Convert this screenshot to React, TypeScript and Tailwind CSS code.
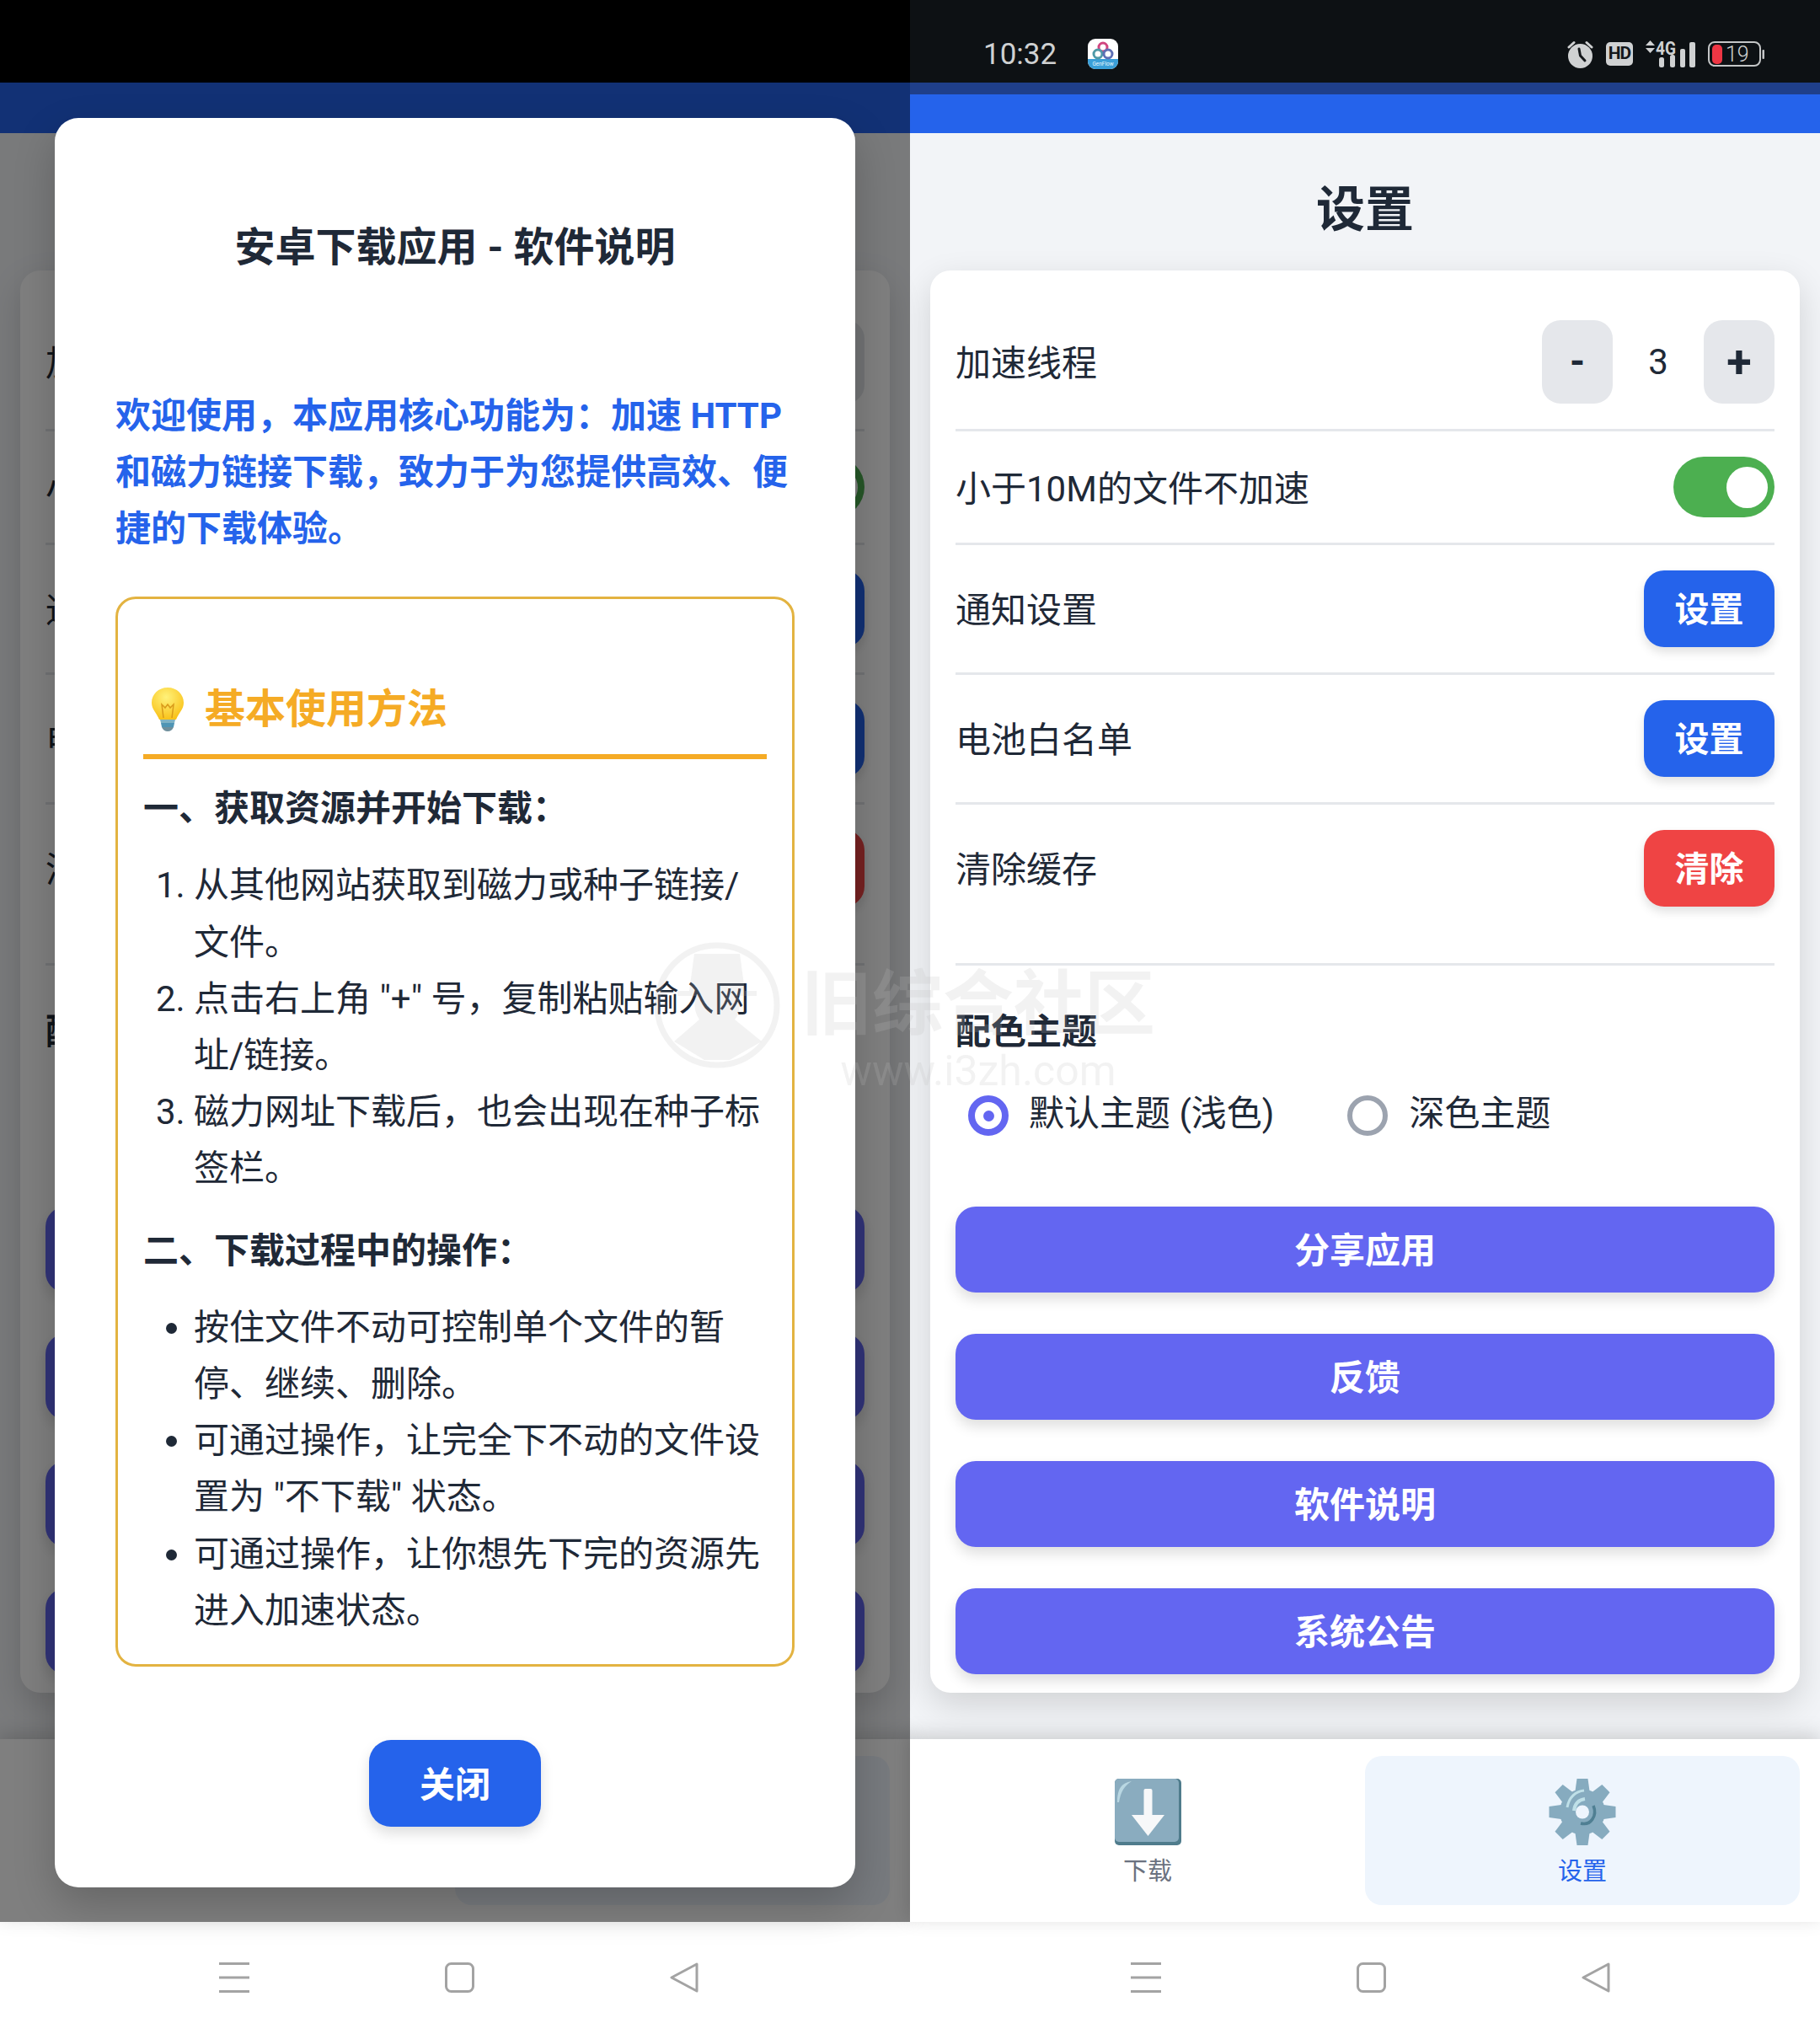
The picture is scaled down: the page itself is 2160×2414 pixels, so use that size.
import React from "react";

function AlarmIcon() {
  return (
    <svg width="31" height="34" viewBox="0 0 31 34">
      <path d="M2 9 L8 3.5 M29 9 L23 3.5" stroke="#cfd1d2" strokeWidth="3" strokeLinecap="round" />
      <circle cx="15.5" cy="19.5" r="14.5" fill="#cfd1d2" />
      <path d="M14 11 L15.5 19 L21 25" stroke="#14181b" strokeWidth="3" fill="none" strokeLinecap="round" />
    </svg>
  );
}

function SignalIcon() {
  return (
    <svg width="59" height="32" viewBox="0 0 59 32">
      <path d="M5.5 0 L11 6 L0 6 Z M5.5 15 L11 9 L0 9 Z" fill="#cfd1d2" />
      <text x="12" y="16.5" fontSize="22" fontWeight="700" fill="#cfd1d2" fontFamily="Roboto, sans-serif" textLength="24" lengthAdjust="spacingAndGlyphs">4G</text>
      <rect x="16" y="20" width="6" height="12" rx="2.5" fill="#cfd1d2" />
      <rect x="29" y="17" width="6" height="15" rx="2.5" fill="#cfd1d2" />
      <rect x="41" y="10" width="6" height="22" rx="2" fill="#cfd1d2" />
      <rect x="52" y="2" width="7" height="30" rx="2" fill="#cfd1d2" />
    </svg>
  );
}

function BatteryIcon() {
  return (
    <svg width="67" height="30" viewBox="0 0 67 30">
      <rect x="1" y="1" width="61" height="28" rx="7" fill="none" stroke="#c4c6c7" strokeWidth="2" />
      <rect x="5" y="4" width="12" height="23" rx="5" fill="#ee3644" />
      <rect x="64.5" y="10" width="2.5" height="11" rx="1" fill="#c4c6c7" />
      <text x="21" y="24" fontSize="25" fill="#cfd1d2" fontFamily="Roboto, sans-serif" fontWeight="300">19</text>
    </svg>
  );
}

function AppIcon() {
  return (
    <svg width="36" height="36" viewBox="0 0 36 36">
      <defs>
        <clipPath id="app-clip">
          <rect width="36" height="36" rx="9" />
        </clipPath>
      </defs>
      <g clipPath="url(#app-clip)">
        <rect width="36" height="36" fill="#ffffff" />
        <rect y="24" width="36" height="12" fill="#3a9fd8" />
        <circle cx="18" cy="10" r="5" fill="none" stroke="#d0457f" strokeWidth="3" />
        <circle cx="12" cy="18" r="5" fill="none" stroke="#4f9aa8" strokeWidth="3" />
        <circle cx="24" cy="18" r="5" fill="none" stroke="#5d6fb5" strokeWidth="3" />
        <text x="18" y="32" fontSize="6.5" textAnchor="middle" fill="#e8f6fd" fontFamily="Roboto, sans-serif">GenFlow</text>
      </g>
    </svg>
  );
}

function StatusBar() {
  return (
    <div className="h-[98px] bg-[#0d1114] flex items-center pt-[30px] pl-[87px] pr-[66px]">
      <span className="text-[35px] leading-none text-[#cfd1d2] font-['Roboto',sans-serif]">10:32</span>
      <span className="ml-[37px] flex">
        <AppIcon />
      </span>
      <div className="ml-auto flex items-center gap-[15px]">
        <AlarmIcon />
        <div className="w-[32px] h-[28px] rounded-[5px] bg-[#cfd1d2] flex items-center justify-center text-[21px] tracking-[-1px] font-bold text-[#14181b] font-['Roboto',sans-serif]">HD</div>
        <SignalIcon />
        <BatteryIcon />
      </div>
    </div>
  );
}

function DownloadEmoji() {
  return (
    <svg width="79" height="79" viewBox="0 0 79 79">
      <rect width="79" height="79" rx="5" fill="#4f7c8c" />
      <rect width="76" height="75" rx="5" fill="#8aacbf" />
      <path d="M3 28 C3 12 8 5 20 3 C12 8 7 15 5 28 Z" fill="#b9d7e2" />
      <rect x="34.5" y="12" width="10" height="33" rx="2" fill="#f7f8f9" />
      <path d="M20 43 L59 43 L39.5 68 Z" fill="#f7f8f9" />
    </svg>
  );
}

function GearEmoji() {
  const angles = [0, 45, 90, 135, 180, 225, 270, 315];
  return (
    <svg width="80" height="79" viewBox="0 0 80 79">
      {angles.map((a) => (
        <path key={a} d="M33.5 0 L46.5 0 L49 18 L31 18 Z" fill="#86abbf" transform={`rotate(${a} 40 39.5)`} />
      ))}
      <circle cx="40" cy="39.5" r="27" fill="#86abbf" />
      <path d="M22 34 C24 22 32 15 42 14" stroke="#bfe0e8" strokeWidth="3" fill="none" />
      <path d="M30 38 C31 29 36 25 43 24" stroke="#bfe0e8" strokeWidth="4" fill="none" />
      <path d="M53 32 C58 44 50 56 38 53" stroke="#4f7f93" strokeWidth="3.5" fill="none" />
      <circle cx="40" cy="39.5" r="8" fill="#eef5fd" />
    </svg>
  );
}

function Row({ label, children, last }: { label: string; children: React.ReactNode; last?: boolean }) {
  return (
    <div className={last ? "flex items-center justify-between pt-[30px] pb-[67px] border-b-[3px] border-[#e5e7eb]" : "flex items-center justify-between py-[30px] border-b-[3px] border-[#e5e7eb]"}>
      <span className="pt-[5px] text-[42px] leading-[60px] text-[#1f2937]">{label}</span>
      {children}
    </div>
  );
}

function SmallButton({ red, children }: { red?: boolean; children: React.ReactNode }) {
  return (
    <div className={red ? "w-[155px] h-[91px] pt-[4px] rounded-[24px] bg-[#ef4444] text-white font-bold text-[41px] flex items-center justify-center shadow-[0_6px_12px_rgba(0,0,0,0.12)]" : "w-[155px] h-[91px] pt-[4px] rounded-[24px] bg-[#2563eb] text-white font-bold text-[41px] flex items-center justify-center shadow-[0_6px_12px_rgba(0,0,0,0.12)]"}>
      {children}
    </div>
  );
}

function WideButton({ children }: { children: React.ReactNode }) {
  return (
    <div className="h-[102px] pt-[3px] rounded-[24px] bg-[#6366f1] text-white font-bold text-[42px] flex items-center justify-center shadow-[0_8px_16px_rgba(0,0,0,0.13)]">
      {children}
    </div>
  );
}

function Settings() {
  return (
    <div className="flex-1 flex flex-col min-h-0 bg-[#f2f4f7]">
      <h1 className="h-[163px] pt-[51px] text-center text-[58px] leading-[80px] font-bold text-[#1f2937]">设置</h1>
      <div className="mx-[24px] rounded-[24px] bg-white px-[30px] pt-[29px] pb-[22px] shadow-[0_14px_40px_rgba(0,0,0,0.14)]">
        <Row label="加速线程">
          <div className="flex items-center">
            <div className="w-[84px] h-[99px] rounded-[22px] bg-[#e5e7eb] flex items-center justify-center text-[46px] font-bold text-[#1f2937]">-</div>
            <span className="w-[108px] text-center text-[42px] text-[#1f2937]">3</span>
            <div className="w-[84px] h-[99px] rounded-[22px] bg-[#e5e7eb] flex items-center justify-center text-[54px] font-bold text-[#1f2937]">+</div>
          </div>
        </Row>
        <Row label="小于10M的文件不加速">
          <div className="w-[120px] h-[72px] rounded-full bg-[#4caf50] flex items-center justify-end pr-[8px]">
            <div className="w-[49px] h-[49px] rounded-full bg-white" />
          </div>
        </Row>
        <Row label="通知设置">
          <SmallButton>设置</SmallButton>
        </Row>
        <Row label="电池白名单">
          <SmallButton>设置</SmallButton>
        </Row>
        <Row label="清除缓存" last>
          <SmallButton red>清除</SmallButton>
        </Row>
        <h3 className="mt-[51px] text-[42px] leading-[56px] font-bold text-[#1f2937]">配色主题</h3>
        <div className="mt-[47px] pl-[15px] flex items-center text-[42px] text-[#1f2937] h-[48px]">
          <span className="w-[48px] h-[48px] rounded-full border-[8px] border-[#6366f1] flex items-center justify-center">
            <span className="w-[13px] h-[13px] rounded-full bg-[#6366f1]" />
          </span>
          <span className="ml-[24px] pb-[6px]">默认主题 (浅色)</span>
          <span className="ml-[87px] w-[48px] h-[48px] rounded-full border-[6px] border-[#9ca3af]" />
          <span className="ml-[25px] pb-[6px]">深色主题</span>
        </div>
        <div className="mt-[84px] flex flex-col gap-[49px]">
          <WideButton>分享应用</WideButton>
          <WideButton>反馈</WideButton>
          <WideButton>软件说明</WideButton>
          <WideButton>系统公告</WideButton>
        </div>
      </div>
    </div>
  );
}

function BottomNav() {
  return (
    <div className="relative z-10 h-[217px] bg-white px-[24px] py-[20px] flex shadow-[0_-5px_22px_rgba(0,0,0,0.17)]">
      <div className="flex-1 flex flex-col items-center pt-[27px]">
        <DownloadEmoji />
        <span className="mt-[13px] text-[29px] leading-[36px] text-[#6b7280]">下载</span>
      </div>
      <div className="flex-1 flex flex-col items-center pt-[27px] rounded-[20px] bg-[#eef5fd]">
        <GearEmoji />
        <span className="mt-[13px] text-[29px] leading-[36px] text-[#2563eb]">设置</span>
      </div>
    </div>
  );
}

function SystemNav({ shift }: { shift?: boolean }) {
  return (
    <div className={shift ? "h-[133px] bg-white flex items-start pt-[48px] pl-[262px] gap-[232px]" : "h-[133px] bg-white flex items-start pt-[48px] pl-[260px] gap-[232px]"}>
      <svg width="36" height="36" viewBox="0 0 36 36">
        <path d="M0 1.5 H36 M0 18 H36 M0 34.5 H36" stroke="#a3a3a3" strokeWidth="3" />
      </svg>
      <svg width="35" height="36" viewBox="0 0 35 36">
        <rect x="1.5" y="1.5" width="32" height="33" rx="6" fill="none" stroke="#a3a3a3" strokeWidth="3" />
      </svg>
      <svg width="34" height="36" viewBox="0 0 34 36">
        <path d="M32 2 L2 18 L32 34 Z" fill="none" stroke="#a3a3a3" strokeWidth="3" strokeLinejoin="round" />
      </svg>
    </div>
  );
}

function Bulb() {
  return (
    <svg width="38" height="52" viewBox="0 0 38 52" className="shrink-0">
      <defs>
        <radialGradient id="bulb" cx="45%" cy="30%" r="70%">
          <stop offset="0%" stopColor="#fff27a" />
          <stop offset="100%" stopColor="#f9c21a" />
        </radialGradient>
      </defs>
      <path d="M19 0 C8 0 0 8 0 18 C0 26 6 30 9 38 L29 38 C32 30 38 26 38 18 C38 8 30 0 19 0 Z" fill="url(#bulb)" />
      <path d="M14 36 L12 20 L16 24 L19 20 L22 24 L26 20 L24 36" fill="none" stroke="#d99a1a" strokeWidth="1.5" />
      <path d="M10 38 H28 L27 42 H11 Z" fill="#7fb2c4" />
      <path d="M11 42 H27 L26 47 H12 Z" fill="#4f95b5" />
      <path d="M12 47 H26 C25 50 22 52 19 52 C16 52 13 50 12 47 Z" fill="#6f8f9c" />
    </svg>
  );
}

function Modal() {
  return (
    <div className="w-[950px] h-[2100px] rounded-[28px] bg-white px-[72px] pt-[124px] shadow-[0_20px_50px_rgba(0,0,0,0.2)]">
      <h2 className="text-center text-[48px] leading-[60px] font-bold text-[#1f2937]">安卓下载应用 - 软件说明</h2>
      <p className="mt-[136px] text-[42px] leading-[67.2px] font-bold text-[#2563eb]">欢迎使用，本应用核心功能为：加速 HTTP 和磁力链接下载，致力于为您提供高效、便捷的下载体验。</p>
      <div className="mt-[47px] rounded-[24px] border-[3px] border-[#e3b341] px-[30px] pt-[97px] pb-[30px] text-[42px] leading-[67.2px] text-[#1f2937]">
        <div className="flex items-center pb-[19px] border-b-[6px] border-[#f5ab25]">
          <span className="ml-[10px] flex">
            <Bulb />
          </span>
          <h3 className="ml-[25px] text-[48px] leading-[68px] font-bold text-[#f5ab25]">基本使用方法</h3>
        </div>
        <h4 className="mt-[25px] font-bold">一、获取资源并开始下载：</h4>
        <ol className="mt-[24px] list-decimal pl-[60px]">
          <li>从其他网站获取到磁力或种子链接/文件。</li>
          <li>点击右上角 "+" 号，复制粘贴输入网址/链接。</li>
          <li>磁力网址下载后，也会出现在种子标签栏。</li>
        </ol>
        <h4 className="mt-[30px] font-bold">二、下载过程中的操作：</h4>
        <ul className="mt-[24px] list-disc pl-[60px]">
          <li>按住文件不动可控制单个文件的暂停、继续、删除。</li>
          <li>可通过操作，让完全下不动的文件设置为 "不下载" 状态。</li>
          <li>可通过操作，让你想先下完的资源先进入加速状态。</li>
        </ul>
      </div>
      <div className="mt-[87px] flex justify-center">
        <div className="w-[204px] h-[103px] pt-[4px] rounded-[26px] bg-[#2563eb] text-white text-[42px] font-bold flex items-center justify-center shadow-[0_8px_16px_rgba(0,0,0,0.13)]">关闭</div>
      </div>
    </div>
  );
}

function Watermark() {
  return (
    <div className="absolute z-30 left-[776px] top-[1118px] flex items-start gap-[25px] pointer-events-none text-[rgba(190,190,190,0.2)]">
      <svg width="150" height="150" viewBox="0 0 150 150">
        <circle cx="75" cy="75" r="71" fill="none" stroke="rgba(190,190,190,0.2)" strokeWidth="7" />
        <path d="M48 14 H102 L108 58 H122 V64 H100 C104 78 100 88 96 92 L128 118 L90 140 L60 140 L24 118 L54 92 C50 86 46 76 50 64 H28 V58 H42 Z" fill="rgba(190,190,190,0.2)" />
      </svg>
      <div className="mt-[30px] flex flex-col items-center">
        <span className="text-[84px] leading-[90px] font-bold">旧综合社区</span>
        <span className="mt-[8px] text-[50px] leading-[50px] font-['Roboto',sans-serif]">www.i3zh.com</span>
      </div>
    </div>
  );
}

export default function App() {
  return (
    <div className="relative w-[2160px] h-[2414px] flex overflow-hidden bg-white font-['Roboto','Noto_Sans_CJK_SC',sans-serif]">
      <div className="w-[1080px] h-full flex flex-col">
        <div className="h-[98px] bg-black" />
        <div className="relative flex-1 flex flex-col min-h-0">
          <div className="h-[60px] bg-[#2563eb]" />
          <Settings />
          <BottomNav />
          <div className="absolute inset-0 z-20 bg-black/50 flex items-center justify-center">
            <Modal />
          </div>
        </div>
        <SystemNav />
      </div>
      <div className="w-[1080px] h-full flex flex-col">
        <StatusBar />
        <div className="h-[60px] bg-[#2563eb]">
          <div className="h-[14px] bg-[#1f3f8a]" />
        </div>
        <Settings />
        <BottomNav />
        <SystemNav shift />
      </div>
      <Watermark />
    </div>
  );
}
